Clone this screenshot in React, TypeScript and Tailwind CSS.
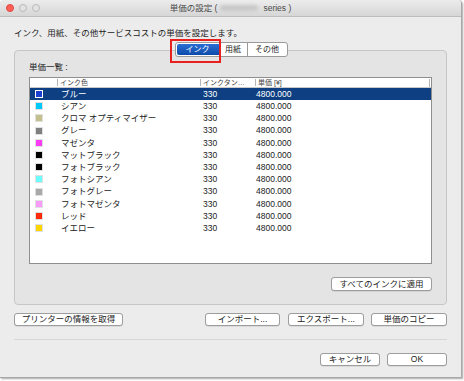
const font = "font-['Liberation_Sans','Noto_Sans_CJK_JP',sans-serif]";

const inks = [
  { name: 'ブルー', color: '#1c3fd0' },
  { name: 'シアン', color: '#00c8f8' },
  { name: 'クロマ オプティマイザー', color: '#c4c08e' },
  { name: 'グレー', color: '#808080' },
  { name: 'マゼンタ', color: '#f93df5' },
  { name: 'マットブラック', color: '#000000' },
  { name: 'フォトブラック', color: '#000000' },
  { name: 'フォトシアン', color: '#6cfcfc' },
  { name: 'フォトグレー', color: '#a9a9a9' },
  { name: 'フォトマゼンタ', color: '#f99cf8' },
  { name: 'レッド', color: '#fc2a0c' },
  { name: 'イエロー', color: '#fdd600' },
];

function Btn({ label, w, h = 'h-[13px]' }: { label: string; w: string; h?: string }) {
  return (
    <div
      className={`${w} ${h} flex items-center justify-center rounded-[3px] border border-[#9d9d9d] bg-white text-[8.5px] leading-none text-[#222] shadow-[0_0.5px_0.5px_rgba(0,0,0,0.15)]`}
    >
      {label}
    </div>
  );
}

export default function App() {
  return (
    <div className={`w-[464px] h-[381px] bg-white ${font}`}>
      <div className="w-[462px] h-[378px] flex flex-col bg-[#ececec] rounded-t-[4px] border-r border-b border-[#a8a8a8] shadow-[1px_1px_2px_rgba(0,0,0,0.35)] overflow-hidden">
        {/* title bar */}
        <div className="relative h-[17px] flex items-center justify-center border-b border-[#bdbdbd] bg-gradient-to-b from-[#ececec] to-[#d6d6d6]">
          <div className="absolute left-[6px] top-[4px] flex gap-[5px]">
            <div className="w-[8px] h-[8px] rounded-full bg-[#fc5f57] border border-[#de4a41]" />
            <div className="w-[8px] h-[8px] rounded-full bg-[#e2e2e2] border border-[#b9b9b9]" />
            <div className="w-[8px] h-[8px] rounded-full bg-[#e2e2e2] border border-[#b9b9b9]" />
          </div>
          <div className="flex items-center text-[8.5px] leading-none text-[#4a4a4a]">
            <span>単価の設定 (</span>
            <span className="mx-[3px] w-[38px] h-[6px] rounded-full bg-[#c9c9c9] blur-[1.5px]" />
            <span className="ml-[2px]">series )</span>
          </div>
        </div>

        <div className="flex flex-col px-[14px]">
          <div className="pt-[11px] text-[8.5px] leading-[10px] text-[#222]">
            インク、用紙、その他サービスコストの単価を設定します。
          </div>

          {/* tabs */}
          <div className="relative z-10 mt-[4px] flex justify-center pl-[1px]">
            <div className="relative flex h-[15px] rounded-[3px] border border-[#9a9a9a] bg-white text-[8px] leading-none text-[#222]">
              <div className="w-[42px] flex items-center justify-center bg-gradient-to-b from-[#2a6fd3] to-[#0b4aa9] text-white rounded-l-[2px] m-[1px] mr-0">
                インク
              </div>
              <div className="w-[28px] flex items-center justify-center border-l border-[#9a9a9a]">用紙</div>
              <div className="w-[40px] flex items-center justify-center border-l border-[#9a9a9a]">その他</div>
              <div className="absolute left-[-6px] top-[-4px] w-[51px] h-[24px] border-2 border-[#e8211f]" />
            </div>
          </div>

          {/* group box */}
          <div className="-mt-[7px] h-[255px] flex flex-col rounded-[4px] border border-[#c6c6c6] bg-[#e4e4e4] px-[14px]">
            <div className="pt-[11px] text-[8.5px] leading-[10px] text-[#222]">単価一覧 :</div>
            <div className="mt-[5px] h-[187px] flex flex-col border border-[#8f8f8f] bg-white">
              <div className="h-[10px] flex items-center border-b border-[#c9c9c9] text-[7px] leading-none text-[#444]">
                <div className="w-[27px]" />
                <div className="w-[143px] border-l border-[#b5b5b5] pl-[2px]">インク色</div>
                <div className="w-[55px] border-l border-[#b5b5b5] pl-[2px]">インクタン…</div>
                <div className="flex-1 border-l border-[#b5b5b5] pl-[2px]">単価 [¥]</div>
                <div className="w-px h-[8px] bg-[#b5b5b5] mr-[1px]" />
              </div>
              {inks.map((ink, i) => (
                <div
                  key={ink.name}
                  className={`h-[12.2px] flex items-center text-[8.5px] leading-none ${
                    i === 0 ? 'bg-[#0d3f82] text-white' : 'text-[#222]'
                  }`}
                >
                  <div className="w-[27px] pl-[5px]">
                    <div
                      className={`w-[8px] h-[8px] ${i === 0 ? 'border border-white' : 'border border-[#e0e0e0]'}`}
                      style={{ backgroundColor: ink.color }}
                    />
                  </div>
                  <div className="w-[143px] pl-[4px]">{ink.name}</div>
                  <div className="w-[55px] pl-[3px]">330</div>
                  <div className="flex-1 pl-[1px]">4800.000</div>
                </div>
              ))}
            </div>
            <div className="mt-[13px] flex justify-end">
              <Btn label="すべてのインクに適用" w="w-[101px]" h="h-[14px]" />
            </div>
          </div>

          {/* action buttons */}
          <div className="mt-[8px] flex items-center">
            <Btn label="プリンターの情報を取得" w="w-[109px]" />
            <div className="flex-1" />
            <Btn label="インポート..." w="w-[75px]" />
            <div className="w-[8px]" />
            <Btn label="エクスポート..." w="w-[76px]" />
            <div className="w-[7px]" />
            <Btn label="単価のコピー" w="w-[76px]" />
          </div>

          <div className="mt-[13px] h-px bg-[#d6d6d6]" />

          <div className="mt-[13px] flex justify-end gap-[7px]">
            <Btn label="キャンセル" w="w-[60px]" />
            <Btn label="OK" w="w-[60px]" />
          </div>
        </div>
      </div>
    </div>
  );
}
